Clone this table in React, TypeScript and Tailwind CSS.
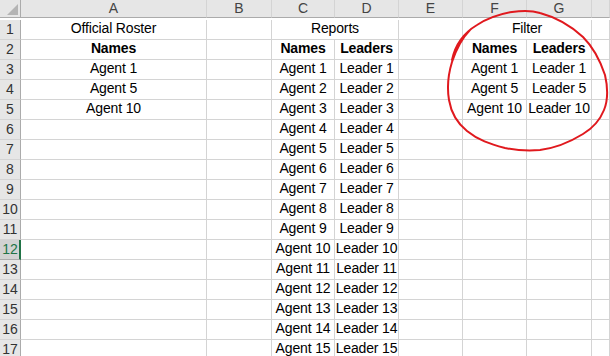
import React from "react";

type Cell = { text?: string; bold?: boolean; span?: number };

const COLS = ["A", "B", "C", "D", "E", "F", "G", ""];

const rosterShown: Record<number, string> = { 3: "Agent 1", 4: "Agent 5", 5: "Agent 10" };
const filterShown: Record<number, [string, string]> = {
  3: ["Agent 1", "Leader 1"],
  4: ["Agent 5", "Leader 5"],
  5: ["Agent 10", "Leader 10"],
};

function buildRow(r: number): Cell[] {
  if (r === 1) {
    return [
      { text: "Official Roster" },
      {},
      { text: "Reports", span: 2 },
      {},
      { text: "Filter", span: 2 },
      {},
    ];
  }
  if (r === 2) {
    return [
      { text: "Names", bold: true },
      {},
      { text: "Names", bold: true },
      { text: "Leaders", bold: true },
      {},
      { text: "Names", bold: true },
      { text: "Leaders", bold: true },
      {},
    ];
  }
  const n = r - 2;
  const f = filterShown[r];
  return [
    { text: rosterShown[r] },
    {},
    { text: `Agent ${n}` },
    { text: `Leader ${n}` },
    {},
    { text: f ? f[0] : undefined },
    { text: f ? f[1] : undefined },
    {},
  ];
}

const rows = Array.from({ length: 17 }, (_, i) => i + 1);

export default function App() {
  return (
    <div
      className="relative h-[356px] w-[610px] overflow-hidden bg-white text-[14px] text-black"
      style={{ fontFamily: '"Liberation Sans", Arial, sans-serif' }}
    >
      <div className="grid grid-cols-[21px_186px_65px_63px_64px_64px_64px_65px_1fr] auto-rows-[20px]">
        {/* corner */}
        <div className="relative h-[18px] border-b border-r border-[#ababab] bg-[#e6e6e6]">
          <div className="absolute bottom-[2px] right-[2px] h-0 w-0 border-b-[11px] border-l-[11px] border-b-[#b4b4b4] border-l-transparent" />
        </div>
        {COLS.map((c, i) => (
          <div
            key={i}
            className="flex h-[18px] items-center justify-center border-b border-r border-b-[#ababab] border-r-[#d4d4d4] bg-[#e6e6e6] text-[#444]"
          >
            {c}
          </div>
        ))}
        {rows.map((r) => (
          <React.Fragment key={r}>
            {r === 12 ? (
              <div className="flex items-center justify-center border-b border-r-2 border-b-[#ababab] border-r-[#217346] bg-[#d2d2d2] pl-[1px] text-[#217346]">
                {r}
              </div>
            ) : (
              <div className="flex items-center justify-center border-b border-r border-b-[#d4d4d4] border-r-[#ababab] bg-[#e6e6e6] text-[#333]">
                {r}
              </div>
            )}
            {buildRow(r).map((cell, i) => (
              <div
                key={i}
                className={`flex items-center justify-center whitespace-nowrap border-b border-r border-[#d4d4d4] pb-[2px] tracking-[-0.15px] ${
                  cell.span === 2 ? "col-span-2" : ""
                } ${cell.bold ? "font-bold" : ""}`}
              >
                {cell.text}
              </div>
            ))}
          </React.Fragment>
        ))}
      </div>

      {/* hand-drawn red ring around the filter block */}
      <svg
        className="pointer-events-none absolute left-0 top-0"
        width="610"
        height="356"
        viewBox="0 0 610 356"
      >
        <path
          d="M452 60 C455 45 462 34 477 25 C488 18 500 14 512 12 C520 11 530 10 540 13 C555 17 570 25 583 37 C593 47 600 60 605 75 C608 88 608 100 604 110 C600 120 593 128 583 134 C570 142 556 148 540 150 C528 151 515 150 505 148 C490 144 478 140 467 131 C457 123 451 112 449 100 C447 88 448 75 452 62 C456 50 462 38 470 30"
          fill="none"
          stroke="#e0191e"
          strokeWidth="2"
          strokeLinecap="round"
          strokeLinejoin="round"
        />
      </svg>
    </div>
  );
}
